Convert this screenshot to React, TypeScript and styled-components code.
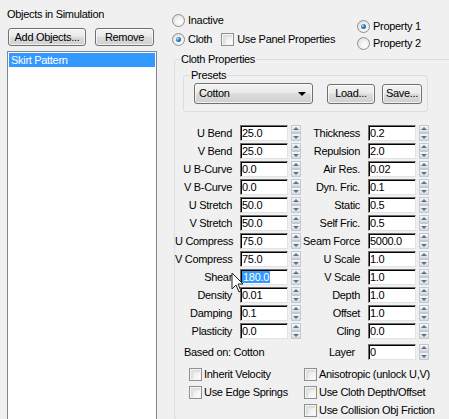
import React from 'react';
import styled, { createGlobalStyle } from 'styled-components';

const GlobalStyle = createGlobalStyle`
  *, *::before, *::after { box-sizing: border-box; }
  html, body { margin: 0; padding: 0; background: #f0f0f0; }
  body { font-family: "Liberation Sans", Arial, sans-serif; font-size: 11px; color: #000; }
`;

const Window = styled.div`
  position: relative;
  display: flex;
  width: 449px;
  height: 419px;
  overflow: hidden;
  background: #f0f0f0;
  font-family: "Liberation Sans", Arial, sans-serif;
  font-size: 11px;
  letter-spacing: -0.3px;
  line-height: 13px;
  color: #000;
  cursor: default;
`;

/* ---------- left pane ---------- */

const LeftPane = styled.div`
  display: flex;
  flex-direction: column;
  flex-shrink: 0;
  width: 157px;
  padding: 8px 0 0 7px;
`;

const Caption = styled.div`
  height: 13px;
`;

const ButtonRow = styled.div`
  display: flex;
  gap: 9px;
  margin-top: 7px;
  padding-left: 1px;
`;

const Button = styled.button<{ $w: number; $h?: number }>`
  width: ${p => p.$w}px;
  height: ${p => p.$h ?? 18}px;
  padding: 0;
  border: 1px solid #707070;
  border-radius: 3px;
  background: linear-gradient(#f2f2f2 0%, #ebebeb 45%, #dddddd 50%, #cfcfcf 100%);
  box-shadow: inset 0 0 0 1px rgba(255, 255, 255, 0.7);
  font: inherit;
  letter-spacing: inherit;
  color: #000;
`;

const ListBox = styled.div`
  flex-shrink: 0;
  width: 150px;
  height: 400px;
  margin-top: 5px;
  padding: 1px;
  border: 1px solid #828790;
  background: #fff;
`;

const ListItem = styled.div<{ $selected?: boolean }>`
  height: 14px;
  padding-left: 2px;
  line-height: 14px;
  background: ${p => (p.$selected ? '#3399ff' : 'transparent')};
  color: ${p => (p.$selected ? '#fff' : '#000')};
`;

/* ---------- right pane ---------- */

const RightPane = styled.div`
  flex-shrink: 0;
  width: 292px;
  padding: 11px 0 0 15px;
`;

const TopRow = styled.div`
  display: grid;
  grid-template-columns: 185px auto;
  height: 38px;
`;

const OptionCol = styled.div<{ $offset?: number; $pitch: number }>`
  display: flex;
  flex-direction: column;
  margin-top: ${p => p.$offset ?? 0}px;

  & > * {
    height: ${p => p.$pitch}px;
  }
`;

const OptionRow = styled.div`
  display: flex;
  align-items: center;
  gap: 9px;
`;

const OptionLabel = styled.label`
  display: flex;
  align-items: center;
  gap: 3px;
  white-space: nowrap;
`;

const RadioDot = styled.span<{ $on?: boolean }>`
  position: relative;
  width: 13px;
  height: 13px;
  border-radius: 50%;
  border: 1px solid #8e8f8f;
  background: radial-gradient(circle at 60% 65%, #ffffff 0%, #f0f0f0 45%, #d3d3d3 100%);
  flex-shrink: 0;

  &::after {
    content: '';
    display: ${p => (p.$on ? 'block' : 'none')};
    position: absolute;
    left: 3px;
    top: 3px;
    width: 5px;
    height: 5px;
    border-radius: 50%;
    background: radial-gradient(circle at 35% 35%, #a6dcff 0%, #2c7fbf 45%, #0d3f6a 100%);
  }
`;

const CheckBox = styled.span`
  width: 13px;
  height: 13px;
  flex-shrink: 0;
  border: 1px solid #8e8f8f;
  background: linear-gradient(135deg, #d8d8d8 0%, #f3f3f3 60%, #ffffff 100%);
  box-shadow: inset 0 0 0 1px #f4f4f4, inset 1px 1px 0 2px #dedede;
`;

const Radio = ({ label, on }: { label: string; on?: boolean }) => (
  <OptionLabel>
    <RadioDot $on={on} />
    {label}
  </OptionLabel>
);

const Check = ({ label }: { label: string }) => (
  <OptionLabel>
    <CheckBox />
    {label}
  </OptionLabel>
);

/* ---------- group boxes ---------- */

const Group = styled.fieldset<{ $w: number; $pad: string }>`
  margin: 0;
  min-width: 0;
  width: ${p => p.$w}px;
  padding: ${p => p.$pad};
  border: 1px solid #d5dfe5;
  border-radius: 3px;
`;

const Legend = styled.legend<{ $shift: number }>`
  margin-left: ${p => p.$shift}px;
  padding: 0 1px;
  line-height: 12px;
`;

const ClothGroup = styled(Group)`
  margin: 4px 0 0 2px;
`;

const PresetRow = styled.div`
  display: flex;
  align-items: center;
`;

const DropDown = styled.div`
  position: relative;
  width: 119px;
  height: 21px;
  padding-left: 4px;
  line-height: 19px;
  border: 1px solid #707070;
  border-radius: 3px;
  background: linear-gradient(#f2f2f2 0%, #ebebeb 45%, #dddddd 50%, #cfcfcf 100%);
  box-shadow: inset 0 0 0 1px rgba(255, 255, 255, 0.7);

  &::after {
    content: '';
    position: absolute;
    right: 6px;
    top: 8px;
    border-left: 4px solid transparent;
    border-right: 4px solid transparent;
    border-top: 4px solid #000;
  }
`;

const PresetButtons = styled.div`
  display: flex;
  gap: 7px;
  margin-left: 14px;
`;

/* ---------- parameter fields ---------- */

const ParamGrid = styled.div`
  display: flex;
  flex-direction: column;
  margin: 12px 0 0 -8px;
`;

const ParamRow = styled.div<{ $top?: number }>`
  display: flex;
  align-items: center;
  height: 18px;
  margin-top: ${p => p.$top ?? 0}px;
`;

const FieldWrap = styled.div`
  display: flex;
  align-items: center;
`;

const FieldLabel = styled.span<{ $w: number; $gap: number }>`
  width: ${p => p.$w}px;
  margin-right: ${p => p.$gap}px;
  text-align: right;
  white-space: nowrap;
`;

const Value = styled.div`
  width: 48px;
  height: 16px;
  padding-left: 1px;
  line-height: 14px;
  border: 1px solid;
  border-color: #6d6d6d #e3e3e3 #e3e3e3 #6d6d6d;
  box-shadow: inset 1px 1px 0 #000;
  background: #fff;
  white-space: nowrap;
  overflow: hidden;
`;

const Selected = styled.span`
  display: inline-block;
  margin-top: 1px;
  padding: 0 1px;
  line-height: 12px;
  background: #3399ff;
  color: #fff;
`;

const Spinner = styled.div`
  display: flex;
  flex-direction: column;
  width: 10px;
  height: 16px;
  margin-left: 3px;
`;

const SpinHalf = styled.span<{ $down?: boolean }>`
  position: relative;
  flex: 1;
  border: 1px solid #c2cad3;
  background: linear-gradient(#f6f6f6, #dcdcdc);

  &::after {
    content: '';
    position: absolute;
    left: 1px;
    top: ${p => (p.$down ? 2 : 1)}px;
    border-left: 3px solid transparent;
    border-right: 3px solid transparent;
    ${p => (p.$down ? 'border-top' : 'border-bottom')}: 3px solid #5a7495;
  }
`;

type FieldProps = {
  label: string;
  value: React.ReactNode;
  labelWidth: number;
  gap?: number;
};

const Field = ({ label, value, labelWidth, gap = 8 }: FieldProps) => (
  <FieldWrap>
    <FieldLabel $w={labelWidth} $gap={gap}>{label}</FieldLabel>
    <Value>{value}</Value>
    <Spinner>
      <SpinHalf />
      <SpinHalf $down />
    </Spinner>
  </FieldWrap>
);

const BasedOn = styled.span`
  width: 126px;
  padding-left: 9px;
`;

const CheckGrid = styled.div`
  display: grid;
  grid-template-columns: 115px auto;
  grid-auto-rows: 18px;
  margin-top: 4px;
  padding-left: 6px;

  & > label {
    gap: 2px;
  }
`;

const Cursor = styled.svg`
  position: absolute;
  left: 231px;
  top: 272px;
`;

const params: [string, React.ReactNode, string, string][] = [
  ['U Bend', '25.0', 'Thickness', '0.2'],
  ['V Bend', '25.0', 'Repulsion', '2.0'],
  ['U B-Curve', '0.0', 'Air Res.', '0.02'],
  ['V B-Curve', '0.0', 'Dyn. Fric.', '0.1'],
  ['U Stretch', '50.0', 'Static', '0.5'],
  ['V Stretch', '50.0', 'Self Fric.', '0.5'],
  ['U Compress', '75.0', 'Seam Force', '5000.0'],
  ['V Compress', '75.0', 'U Scale', '1.0'],
  ['Shear', <Selected key="s">180.0</Selected>, 'V Scale', '1.0'],
  ['Density', '0.01', 'Depth', '1.0'],
  ['Damping', '0.1', 'Offset', '1.0'],
  ['Plasticity', '0.0', 'Cling', '0.0'],
];

export default function App() {
  return (
    <>
      <GlobalStyle />
      <Window>
        <LeftPane>
          <Caption>Objects in Simulation</Caption>
          <ButtonRow>
            <Button $w={78}>Add Objects...</Button>
            <Button $w={59}>Remove</Button>
          </ButtonRow>
          <ListBox>
            <ListItem $selected>Skirt Pattern</ListItem>
          </ListBox>
        </LeftPane>

        <RightPane>
          <TopRow>
            <OptionCol $pitch={19}>
              <Radio label="Inactive" />
              <OptionRow>
                <Radio label="Cloth" on />
                <Check label="Use Panel Properties" />
              </OptionRow>
            </OptionCol>
            <OptionCol $pitch={17} $offset={7}>
              <Radio label="Property 1" on />
              <Radio label="Property 2" />
            </OptionCol>
          </TopRow>

          <ClothGroup $w={290} $pad="4px 0 0 8px">
            <Legend $shift={-3}>Cloth Properties</Legend>

            <Group $w={245} $pad="2px 0 7px 10px">
              <Legend $shift={-4}>Presets</Legend>
              <PresetRow>
                <DropDown>Cotton</DropDown>
                <PresetButtons>
                  <Button $w={48} $h={20}>Load...</Button>
                  <Button $w={40} $h={20}>Save...</Button>
                </PresetButtons>
              </PresetRow>
            </Group>

            <ParamGrid>
              {params.map(([l1, v1, l2, v2]) => (
                <ParamRow key={l1}>
                  <Field label={l1} value={v1} labelWidth={57} />
                  <Field label={l2} value={v2} labelWidth={59} />
                </ParamRow>
              ))}
              <ParamRow $top={3}>
                <BasedOn>Based on: Cotton</BasedOn>
                <Field label="Layer" value="0" labelWidth={54} gap={13} />
              </ParamRow>
            </ParamGrid>

            <CheckGrid>
              <Check label="Inherit Velocity" />
              <Check label="Anisotropic (unlock U,V)" />
              <Check label="Use Edge Springs" />
              <Check label="Use Cloth Depth/Offset" />
              <span />
              <Check label="Use Collision Obj Friction" />
            </CheckGrid>
          </ClothGroup>
        </RightPane>

        <Cursor width="13" height="21" viewBox="0 0 13 21">
          <path
            d="M1 1 L1 17 L5 13 L8 20 L10 19 L7 12 L12 12 Z"
            fill="#fff"
            stroke="#222"
            strokeWidth="1"
            strokeLinejoin="round"
          />
        </Cursor>
      </Window>
    </>
  );
}
